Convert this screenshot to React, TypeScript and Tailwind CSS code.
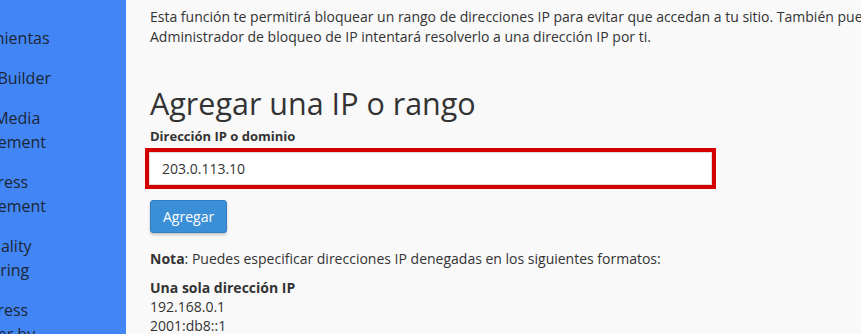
export default function App() {
  const sideItems = [
    ["Herramientas"],
    ["Sitejet Builder"],
    ["Social Media", "Management"],
    ["WordPress", "Management"],
    ["Site Quality", "Monitoring"],
    ["WordPress", "Manager by"],
  ];

  return (
    <div className="flex h-[334px] w-[861px] overflow-hidden bg-[#f9f9f9] font-['Open_Sans',sans-serif] text-[#333]">
      {/* left nav, clipped at the left edge */}
      <div className="w-[126px] shrink-0 overflow-hidden bg-[#4285f4]">
        <div className="ml-[-53px] flex flex-col gap-[16px] pt-[26px] text-[16px] leading-[24px] text-[#1b2636] whitespace-nowrap">
          {sideItems.map((lines, i) => (
            <div key={i}>
              {lines.map((l) => (
                <div key={l}>{l}</div>
              ))}
            </div>
          ))}
        </div>
      </div>

      <div className="w-[1000px] shrink-0 px-[24px] pt-[7px]">
        <p className="whitespace-nowrap text-[14px] leading-[20px]">
          Esta función te permitirá bloquear un rango de direcciones IP para evitar que accedan a tu sitio. También puedes introducir un nombre de dominio completo y el
          <br />
          Administrador de bloqueo de IP intentará resolverlo a una dirección IP por ti.
        </p>

        <h2 className="mt-[38px] text-[30.5px] leading-[36px] font-normal">Agregar una IP o rango</h2>

        <label className="mt-[6px] block text-[13px] leading-[18px] font-bold">Dirección IP o dominio</label>

        <div className="ml-[-5px] mt-[3px] w-[571px] border-[4px] border-[#d40000]">
          <input
            readOnly
            value="203.0.113.10"
            className="block h-[33px] w-full border border-[#ddd] bg-white px-[12px] text-[14px] text-[#333] outline-none"
          />
        </div>

        <button className="mt-[11px] h-[33px] rounded-[3px] border border-[#2f7cc2] bg-[#3b8fd6] px-[12px] text-[14px] text-white shadow-[0_2px_3px_rgba(0,0,0,0.2)]">
          Agregar
        </button>

        <p className="mt-[16px] text-[14px] leading-[20px]">
          <span className="font-bold">Nota</span>: Puedes especificar direcciones IP denegadas en los siguientes formatos:
        </p>

        <div className="mt-[9px] text-[14px] leading-[19px]">
          <div className="font-bold">Una sola dirección IP</div>
          <div>192.168.0.1</div>
          <div>2001:db8::1</div>
        </div>
      </div>
    </div>
  );
}
